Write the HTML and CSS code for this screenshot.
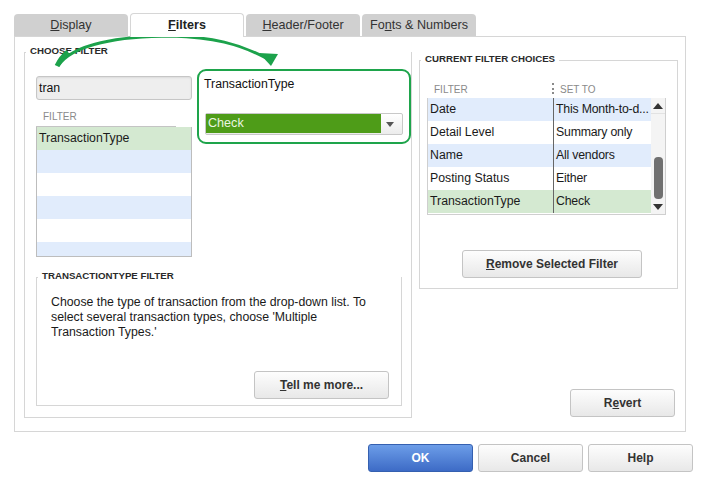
FILE: index.html
```html
<!DOCTYPE html>
<html>
<head>
<meta charset="utf-8">
<link rel="stylesheet" href="styles.css">
</head>
<body>
<div class="page">
  <div class="tabs">
    <div class="tab"><u>D</u>isplay</div>
    <div class="tab active"><u>F</u>ilters</div>
    <div class="tab"><u>H</u>eader/Footer</div>
    <div class="tab">Fo<u>n</u>ts &amp; Numbers</div>
  </div>
  <div class="panel">
    <div class="group choose">
      <div class="legend">CHOOSE FILTER</div>
      <div class="choose-row">
        <div class="left-col">
          <div class="search">tran</div>
          <div class="list-head">FILTER</div>
          <div class="list">
            <div class="row sel">TransactionType</div>
            <div class="row alt"></div>
            <div class="row"></div>
            <div class="row alt"></div>
            <div class="row"></div>
            <div class="row alt"></div>
          </div>
        </div>
        <div class="highlight">
          <div class="hl-label">TransactionType</div>
          <div class="select">
            <span class="select-value">Check</span>
            <span class="select-arrow"></span>
          </div>
        </div>
      </div>
      <div class="group desc-group">
        <div class="legend">TRANSACTIONTYPE FILTER</div>
        <p class="desc">Choose the type of transaction from the drop-down list. To select several transaction types, choose 'Multiple Transaction Types.'</p>
        <button class="btn tell"><u>T</u>ell me more...</button>
      </div>
    </div>
    <div class="right-col">
      <div class="group current">
        <div class="legend">CURRENT FILTER CHOICES</div>
        <div class="cur-head">
          <span class="h1">FILTER</span>
          <span class="dots"></span>
          <span class="h2">SET TO</span>
        </div>
        <div class="table">
          <div class="rows">
            <div class="trow alt"><span class="c1">Date</span><span class="c2">This Month-to-d...</span></div>
            <div class="trow"><span class="c1">Detail Level</span><span class="c2">Summary only</span></div>
            <div class="trow alt"><span class="c1">Name</span><span class="c2">All vendors</span></div>
            <div class="trow"><span class="c1">Posting Status</span><span class="c2">Either</span></div>
            <div class="trow sel"><span class="c1">TransactionType</span><span class="c2">Check</span></div>
          </div>
          <div class="scrollbar">
            <div class="sb-btn"><span class="tri-up"></span></div>
            <div class="sb-track"><div class="thumb"></div></div>
            <div class="sb-btn"><span class="tri-down"></span></div>
          </div>
        </div>
        <button class="btn remove"><u>R</u>emove Selected Filter</button>
      </div>
      <button class="btn revert">R<u>e</u>vert</button>
    </div>
  </div>
  <div class="footer">
    <button class="btn primary">OK</button>
    <button class="btn">Cancel</button>
    <button class="btn">Help</button>
  </div>
  <svg class="arrow" width="300" height="80" viewBox="0 0 300 80">
    <path d="M58 66 C 72 44, 120 36, 172 36 C 212 37, 240 44, 266 58" fill="none" stroke="#1ca24b" stroke-width="3"/>
    <path d="M57 66 C 60 60, 63 56, 68 52" fill="none" stroke="#1ca24b" stroke-width="5" stroke-linecap="butt"/>
    <polygon points="259,53 278,54 271,66" fill="#1ca24b"/>
  </svg>
</div>
</body>
</html>
```
FILE: styles.css
```css
* { box-sizing: border-box; }
html, body { margin: 0; padding: 0; background: #fff; }
body {
  font-family: "Liberation Sans", Arial, sans-serif;
  font-size: 12px;
  color: #1a1a1a;
}
.page {
  position: relative;
  width: 709px;
  height: 486px;
  padding: 13px 0 0 14px;
}
.tabs {
  display: flex;
  gap: 2px;
  height: 23px;
  align-items: flex-end;
}
.tab {
  width: 114px;
  height: 22px;
  line-height: 22px;
  text-align: center;
  background: #d0d0d0;
  border-radius: 4px 4px 0 0;
  font-size: 12.6px;
  color: #333;
}
.tab.active {
  position: relative;
  z-index: 1;
  height: 24px;
  margin-bottom: -1px;
  background: #fff;
  border: 1px solid #d6d6d6;
  border-bottom: none;
  font-weight: bold;
  line-height: 22px;
  color: #222;
}
.panel {
  width: 672px;
  height: 396px;
  border: 1px solid #d6d6d6;
  padding: 15px 7px 0 9px;
  display: flex;
  align-items: flex-start;
  gap: 7px;
}
.group {
  border: 1px solid #d6d6d6;
}
.legend {
  display: table;
  margin: -8px 0 0 1px;
  padding: 0 4px;
  background: #fff;
  font-size: 9.7px;
  line-height: 12px;
  font-weight: bold;
  color: #2a2a2a;
}
.choose {
  width: 388px;
  height: 366px;
  display: flex;
  flex-direction: column;
}
.choose-row {
  display: flex;
  margin-top: 12px;
}
.left-col {
  width: 156px;
  margin-left: 11px;
  margin-top: 7px;
}
.search {
  height: 24px;
  border: 1px solid #c6c6c6;
  border-radius: 3px;
  background: #eeeeee;
  box-shadow: inset 0 1px 2px rgba(0,0,0,0.08);
  padding-left: 2px;
  line-height: 22px;
  font-size: 12.3px;
  color: #111;
}
.list-head {
  margin-top: 11px;
  width: 140px;
  height: 16px;
  padding-left: 7px;
  font-size: 10px;
  line-height: 12px;
  color: #8a8a8a;
  border-bottom: 1px solid #c4c4c4;
}
.list {
  height: 130px;
  border: 1px solid #bdbdbd;
  border-top: none;
  overflow: hidden;
}
.row {
  height: 23px;
  line-height: 23px;
  padding-left: 2px;
  background: #fff;
  font-size: 12.3px;
}
.row.alt { background: #e1ecfc; }
.row.sel { background: #d4e9d1; }
.highlight {
  margin-left: 5px;
  width: 214px;
  height: 75px;
  border: 2px solid #1ea44b;
  border-radius: 9px;
  padding: 6px 0 0 5px;
}
.hl-label {
  line-height: 15px;
  font-size: 12.3px;
  color: #111;
}
.select {
  margin: 21px 0 0 1px;
  width: 198px;
  height: 22px;
  border: 1px solid #c8c8c8;
  border-radius: 2px;
  background: linear-gradient(#ffffff, #ececec);
  display: flex;
  align-items: flex-start;
}
.select-value {
  width: 175px;
  height: 19px;
  background: #4e9c18;
  color: #eaf5e0;
  font-size: 12.6px;
  line-height: 19px;
  padding-left: 2px;
}
.select-arrow {
  margin: 8px 0 0 5px;
  width: 0;
  height: 0;
  border-left: 4.5px solid transparent;
  border-right: 4.5px solid transparent;
  border-top: 5px solid #555;
}
.desc-group {
  margin: 20px 0 0 11px;
  width: 366px;
  height: 129px;
  display: flex;
  flex-direction: column;
}
.desc {
  margin: 13px 0 0 0;
  padding: 0 0 0 14px;
  width: 336px;
  line-height: 15px;
  font-size: 12.3px;
  color: #1a1a1a;
}
.btn {
  font-family: "Liberation Sans", Arial, sans-serif;
  font-size: 12px;
  font-weight: bold;
  color: #333;
  height: 28px;
  width: 105px;
  border: 1px solid #c4c4c4;
  border-radius: 3px;
  background: linear-gradient(#fdfdfd, #e8e8e8);
  padding: 0;
}
.tell {
  width: 135px;
  margin: auto 12px 6px auto;
}
.right-col {
  width: 259px;
  height: 366px;
  display: flex;
  flex-direction: column;
}
.current {
  margin-top: 8px;
  height: 229px;
}
.cur-head {
  margin: 19px 0 0 7px;
  display: flex;
  align-items: flex-start;
  font-size: 10px;
  line-height: 12px;
  color: #8a8a8a;
}
.cur-head .h1 {
  width: 125px;
  padding-left: 7px;
}
.dots {
  width: 2px;
  height: 11px;
  margin-top: -1px;
  border-left: 2px dotted #8a8a8a;
}
.cur-head .h2 { padding-left: 6px; }
.table {
  margin: 2px 0 0 7px;
  width: 239px;
  display: flex;
  border: 1px solid #cfcfcf;
  border-top: none;
}
.rows { width: 223px; }
.trow {
  display: flex;
  height: 23px;
  line-height: 23px;
  background: #fff;
  font-size: 12.3px;
}
.trow.alt { background: #e1ecfc; }
.trow.sel { background: #d4e9d1; }
.c1 {
  width: 126px;
  padding-left: 2px;
  border-right: 1px solid #666;
}
.c2 {
  width: 97px;
  padding-left: 2px;
  white-space: nowrap;
  letter-spacing: -0.2px;
}
.scrollbar {
  width: 15px;
  display: flex;
  flex-direction: column;
  background: #f4f4f4;
}
.sb-btn {
  height: 15px;
  display: flex;
  align-items: center;
  justify-content: center;
  background: #f4f4f4;
}
.tri-up {
  width: 0; height: 0;
  border-left: 5px solid transparent;
  border-right: 5px solid transparent;
  border-bottom: 6px solid #333;
}
.tri-down {
  width: 0; height: 0;
  border-left: 5px solid transparent;
  border-right: 5px solid transparent;
  border-top: 6px solid #333;
}
.sb-track {
  flex: 1;
  border-top: 1px solid #e2e2e2;
  padding: 43px 0 0 3px;
}
.thumb {
  width: 9px;
  height: 42px;
  border-radius: 4px;
  background: #707070;
}
.remove {
  width: 180px;
  margin: 35px 0 0 42px;
}
.revert {
  margin: auto 3px 1px auto;
}
.footer {
  display: flex;
  justify-content: flex-end;
  gap: 5px;
  margin-top: 12px;
  padding-right: 16px;
}
.btn.primary {
  color: #fff;
  border-color: #3560b0;
  background: linear-gradient(#6c9de8, #3d6bc6);
}
.arrow {
  position: absolute;
  left: 0;
  top: 0;
  pointer-events: none;
}
```
